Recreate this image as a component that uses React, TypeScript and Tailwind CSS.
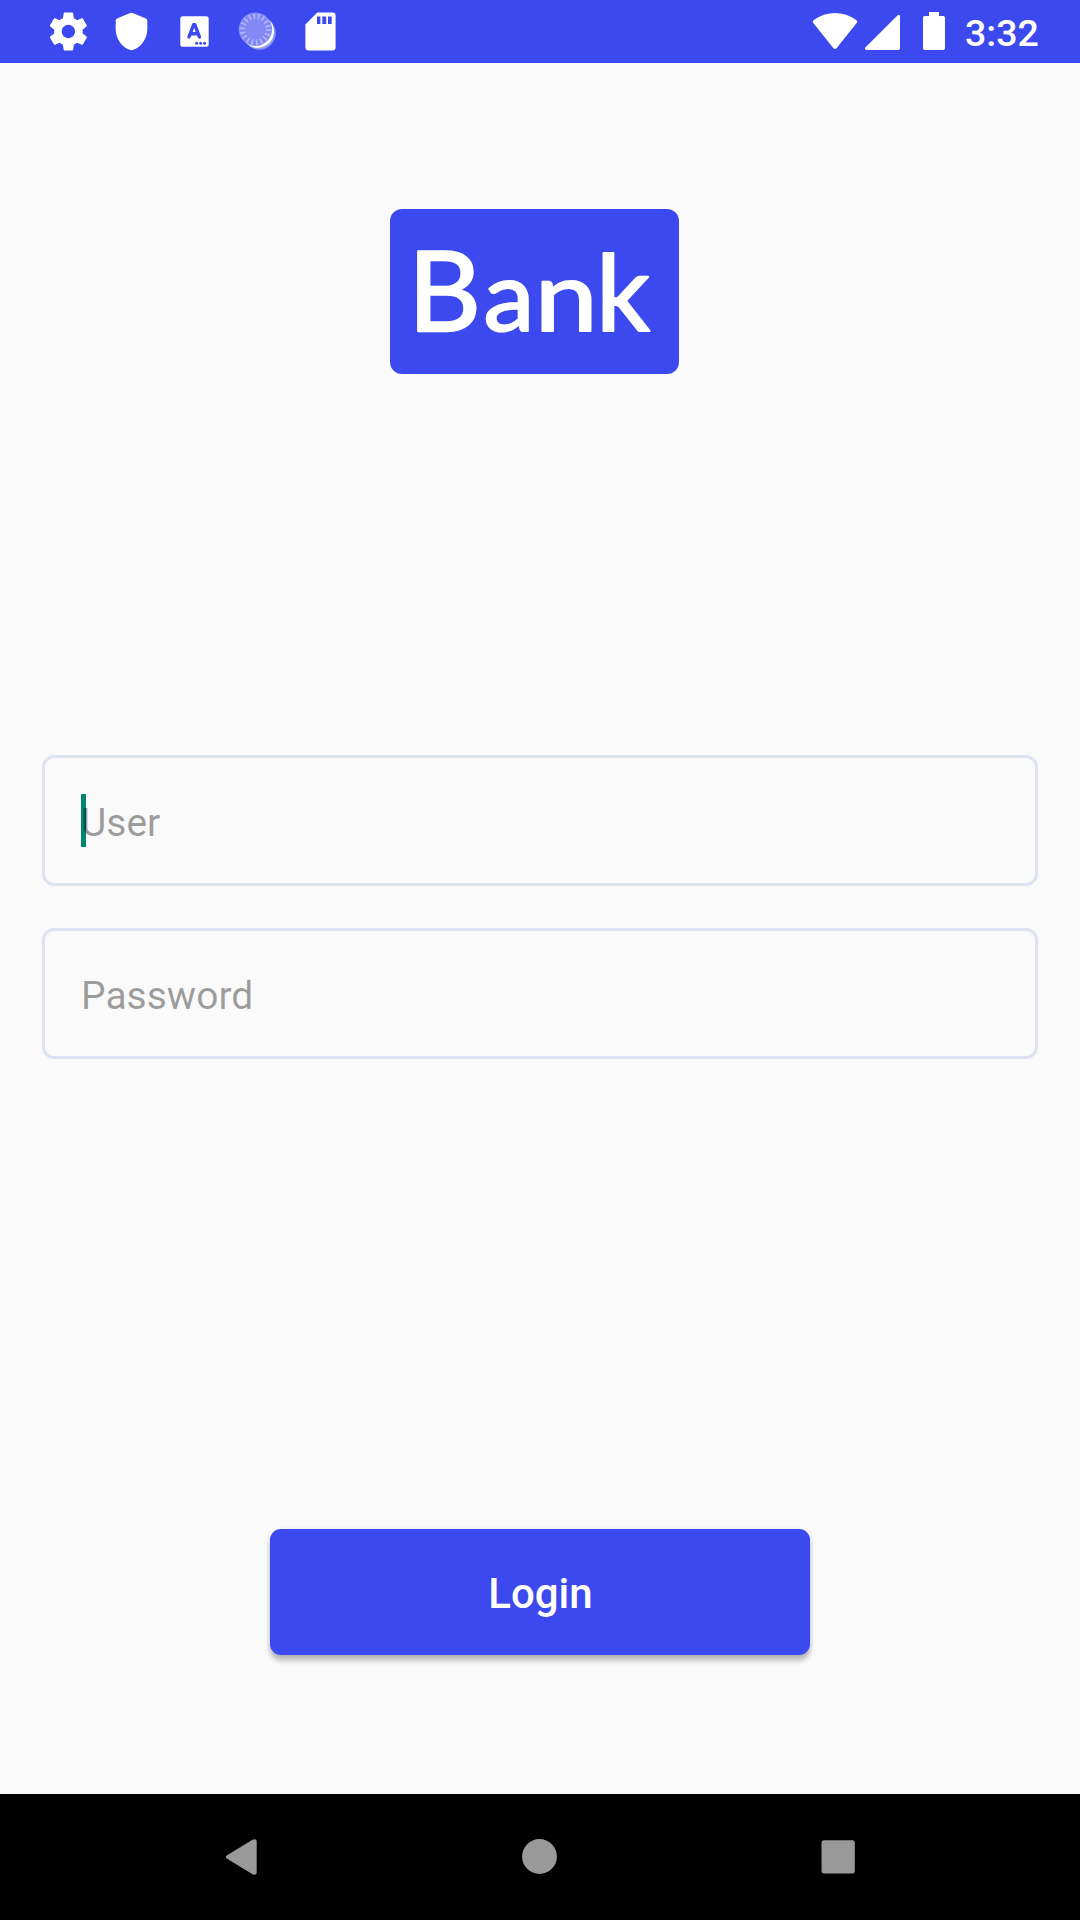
const StatusIcons = () => (
  <svg className="h-[63px] w-[400px]" viewBox="0 0 400 63" fill="#fff">
    <g transform="translate(45.6 8.7) scale(1.9)">
      <path d="M19.43 12.98c.04-.32.07-.64.07-.98s-.03-.66-.07-.98l2.11-1.65c.19-.15.24-.42.12-.64l-2-3.46c-.12-.22-.39-.3-.61-.22l-2.49 1c-.52-.4-1.08-.73-1.69-.98l-.38-2.65C14.46 2.18 14.25 2 14 2h-4c-.25 0-.46.18-.49.42l-.38 2.65c-.61.25-1.17.59-1.69.98l-2.49-1c-.23-.09-.49 0-.61.22l-2 3.46c-.13.22-.07.49.12.64l2.11 1.65c-.04.32-.07.65-.07.98s.03.66.07.98l-2.11 1.65c-.19.15-.24.42-.12.64l2 3.46c.12.22.39.3.61.22l2.49-1c.52.4 1.08.73 1.69.98l.38 2.65c.03.24.24.42.49.42h4c.25 0 .46-.18.49-.42l.38-2.65c.61-.25 1.17-.59 1.69-.98l2.49 1c.23.09.49 0 .61-.22l2-3.46c.12-.22.07-.49-.12-.64l-2.11-1.65zM12 15.5c-1.93 0-3.5-1.57-3.5-3.5s1.57-3.5 3.5-3.5 3.5 1.57 3.5 3.5-1.57 3.5-3.5 3.5z" />
    </g>
    <path d="M130.2 13.1q1.2-.6 2.4 0l13.3 5.4q1.4.6 1.4 2.2v8.3c0 9.5-6 18.2-14.6 21.1q-1.3.4-2.5 0c-8.5-2.9-14.5-11.6-14.5-21.1v-8.3q0-1.6 1.4-2.2z" />
    <rect x="180.3" y="16.2" width="28.4" height="30.5" rx="2.5" />
    <path
      d="M189 37l4.6-12.4h1.2L199.5 37M190.6 33.7h7.3"
      fill="none"
      stroke="#3c49ee"
      strokeWidth="3.4"
      strokeLinecap="round"
      strokeLinejoin="round"
    />
    <g fill="#3c49ee">
      <circle cx="196.6" cy="43.2" r="1.5" />
      <circle cx="200.6" cy="43.2" r="1.5" />
      <circle cx="204.6" cy="43.2" r="1.5" />
    </g>
    <circle cx="259.3" cy="33.2" r="16.5" fill="#8d95f5" />
    <circle cx="257.7" cy="31.5" r="16.3" />
    <circle cx="255.4" cy="29.3" r="16.7" fill="#8289f4" />
    <circle cx="255.4" cy="29.3" r="13" fill="none" stroke="#b6baf9" strokeWidth="5.6" strokeDasharray="1.5 3.038" />
    <path
      fillRule="evenodd"
      d="M317.3 12.6h15q3.3 0 3.3 3.3v31.3q0 3.3-3.3 3.3h-23.6q-3.3 0-3.3-3.3V24.6zM317 16.5v7.6h3.4v-7.6zM322.3 16.5v7.6h3.9v-7.6zM328 16.5v7.6h3.7v-7.6z"
    />
  </svg>
);

const SystemIcons = () => (
  <svg className="h-[63px] w-[160px]" viewBox="800 0 160 63" fill="#fff">
    <path d="M813.1 22.7q-.9-1.3.3-2.4C827 10.6 843 10.6 856.6 20.3q1.2 1.1.3 2.4L836.7 47.9q-1.7 2-3.4 0z" />
    <path d="M897.7 15.2q2.3-1.5 2.3 1V48.3q0 1.7-1.7 1.7H866.7q-2.7-.2-1.3-2.5z" />
    <path d="M929 12h10v4h4.3q1.7 0 1.7 1.7v30.6q0 1.7-1.7 1.7h-18.6q-1.7 0-1.7-1.7V17.7q0-1.7 1.7-1.7h4.3z" />
  </svg>
);

const Logo = () => (
  <div className="ml-[389.5px] mt-[146px] h-[164.5px] w-[289px] rounded-[12px] bg-[#3c49ee] blur-[0.7px]">
    <svg
      className="h-full w-full"
      viewBox="389.5 209 289 164.5"
      fill="#fff"
      stroke="#fff"
      strokeLinejoin="round"
      fontFamily="Lato, sans-serif"
      fontSize="115"
      strokeWidth="2.4"
    >
      <text transform="translate(407.5 331.3) scale(.98 .96)">B</text>
      <text transform="translate(483 331.3) scale(.89 .85)">a</text>
      <text transform="translate(534.3 331.3) scale(.98 .84)">n</text>
      <text transform="translate(595.8 331.3) scale(.92 .935)">k</text>
    </svg>
  </div>
);

const Field = ({ label, focused = false }: { label: string; focused?: boolean }) => (
  <div className="flex h-[131px] items-center rounded-[12px] border-[3px] border-[#dde3f0] pl-9">
    <div className="relative">
      {focused && <span className="absolute left-0 top-0 h-[53px] w-[5px] bg-[#008577]" />}
      <span className="relative block h-[53px] pt-[6px] text-[39px] leading-[46px] text-black/[.38]">{label}</span>
    </div>
  </div>
);

export default function App() {
  return (
    <div className="flex h-[1920px] w-[1080px] flex-col overflow-hidden bg-[#fafafa] font-[Roboto,sans-serif]">
      <header className="flex h-[63px] shrink-0 justify-between bg-[#3c49ee]">
        <StatusIcons />
        <div className="flex">
          <SystemIcons />
          <span className="w-[120px] pl-[5px] pt-[9px] text-[37.5px] font-medium leading-[48px] text-white">3:32</span>
        </div>
      </header>
      <main className="flex min-h-0 flex-1 flex-col">
        <Logo />
        <form className="mx-[42px] mt-[381.5px] flex flex-col gap-[42px]">
          <Field label="User" focused />
          <Field label="Password" />
        </form>
        <button
          type="button"
          className="mx-auto mt-[470px] h-[126px] w-[540px] rounded-[11px] bg-[#3c49ee] pb-px pl-px pt-[3px] text-[42px] font-medium text-white shadow-[0_6px_5px_rgba(0,0,0,0.22),0_1px_5px_rgba(0,0,0,0.12)]"
        >
          Login
        </button>
      </main>
      <nav className="h-[126px] shrink-0 bg-black">
        <svg className="h-[126px] w-[1080px]" viewBox="0 1794 1080 126" fill="#999">
          <path d="M226.7 1855.5l25.8-15.7q4.2-1.8 4.2 1.7v31q0 3.5-4.2 1.7l-25.8-15.7q-2-1.500 0-3z" />
          <circle cx="539.5" cy="1856.5" r="17.4" />
          <rect x="821.5" y="1840.3" width="33.3" height="33.3" rx="2.5" />
        </svg>
      </nav>
    </div>
  );
}
